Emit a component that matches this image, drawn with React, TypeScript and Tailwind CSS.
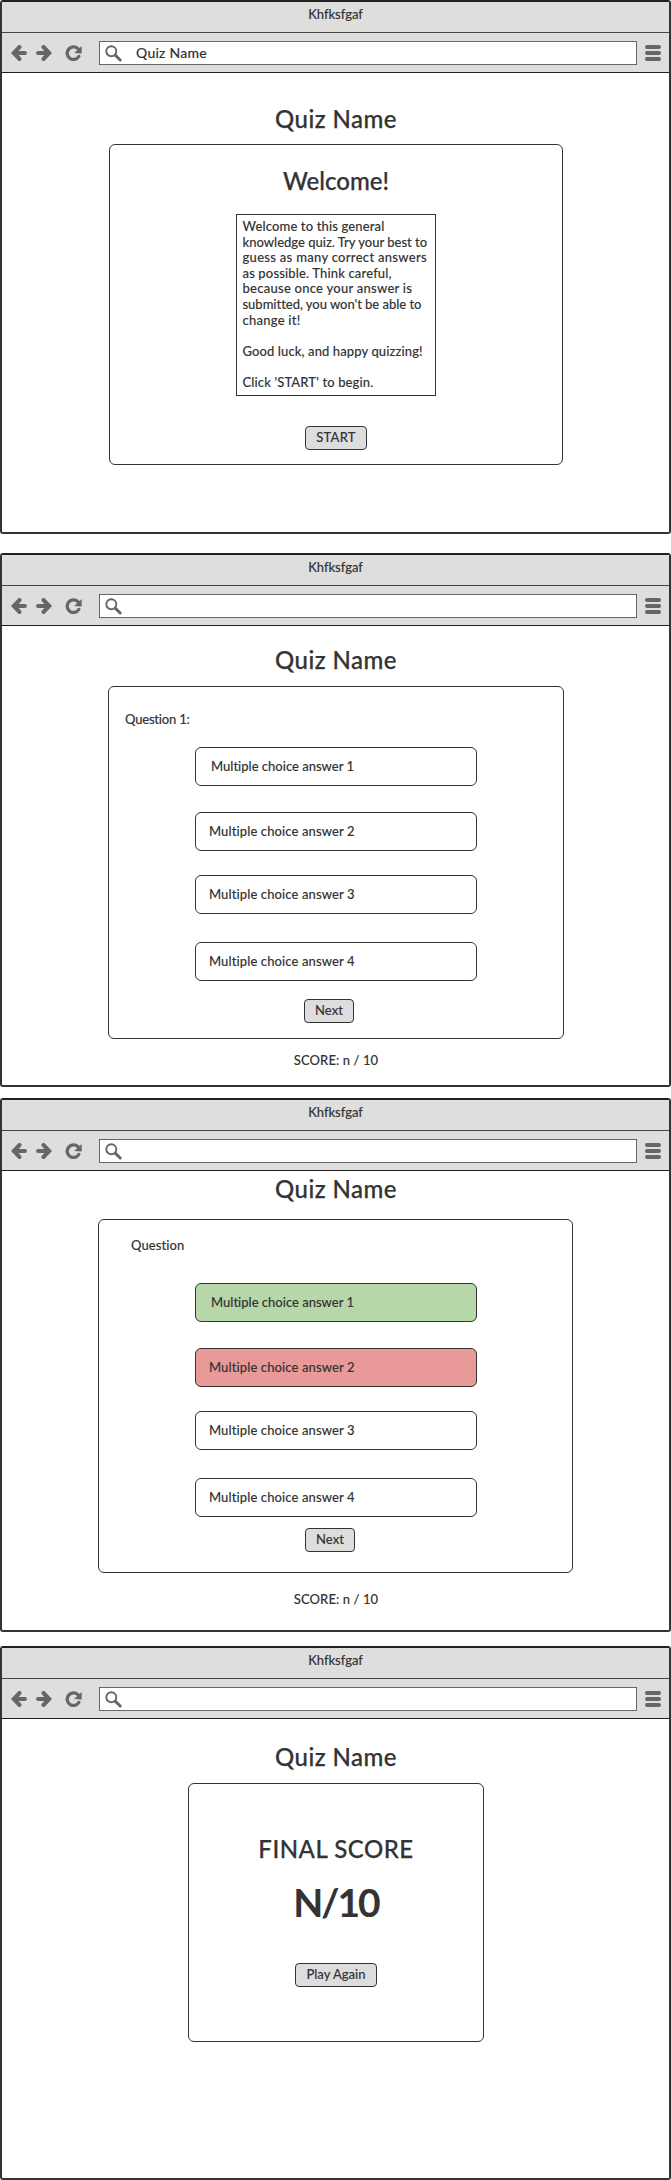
import type { ReactNode } from 'react';

function BackIcon() {
  return (
    <svg width="16" height="16" viewBox="0 0 16 16" fill="none" stroke="#666" strokeWidth="4.2" strokeLinecap="round">
      <path d="M8.4 2.1 2.8 8l5.6 5.9M3.5 8H13.9" />
    </svg>
  );
}

function ForwardIcon() {
  return (
    <svg width="16" height="16" viewBox="0 0 16 16" fill="none" stroke="#666" strokeWidth="4.2" strokeLinecap="round">
      <path d="M7.6 2.1 13.2 8l-5.6 5.9M12.5 8H2.1" />
    </svg>
  );
}

function ReloadIcon() {
  return (
    <svg width="17" height="16" viewBox="0 0 17 16" fill="none">
      <path d="M13.8 11.5A6.3 6.3 0 1 1 12.9 3.7" stroke="#666" strokeWidth="3.3" strokeLinecap="round" />
      <path d="M16.7 1V8.6L9.2 8Z" fill="#666" />
    </svg>
  );
}

function SearchIcon() {
  return (
    <svg width="17" height="17" viewBox="0 0 17 17" fill="none" stroke="#666" strokeLinecap="round">
      <circle cx="6.3" cy="6.2" r="5" strokeWidth="1.9" />
      <path d="m10.2 10.2 5 4.8" strokeWidth="3" />
    </svg>
  );
}

function MenuIcon() {
  return (
    <div className="flex flex-col gap-0.5">
      <div className="h-1 w-4 rounded-full bg-[#666]" />
      <div className="h-1 w-4 rounded-full bg-[#666]" />
      <div className="h-1 w-4 rounded-full bg-[#666]" />
    </div>
  );
}

function BrowserWindow({ url, className = '', children }: { url?: string; className?: string; children: ReactNode }) {
  return (
    <section
      className={`flex h-[534px] w-[671px] flex-col overflow-hidden rounded-[3px] border-2 border-[#333] border-t-[#231f20] bg-white ${className}`}
    >
      <div className="h-[31px] shrink-0 border-b border-[#444] bg-[#dededd] pt-[5px] text-center tracking-[-0.05px]">
        Khfksfgaf
      </div>
      <div className="flex h-10 shrink-0 items-start border-b border-[#231f20] bg-[#dededd] pl-[9px]">
        <div className="mt-3">
          <BackIcon />
        </div>
        <div className="mt-3 ml-[9px]">
          <ForwardIcon />
        </div>
        <div className="mt-3 ml-[13px]">
          <ReloadIcon />
        </div>
        <div className="mt-2 ml-[17px] flex h-6 w-[538px] items-start border border-[#666] bg-white pl-[4.5px]">
          <div className="mt-[3px]">
            <SearchIcon />
          </div>
          {url && <span className="mt-0.5 ml-[14.5px] text-[14px] leading-[17px] tracking-[0.25px]">{url}</span>}
        </div>
        <div className="mt-3 ml-2">
          <MenuIcon />
        </div>
      </div>
      <div className="flex flex-col items-center pl-px">{children}</div>
    </section>
  );
}

function Heading({ className = '' }: { className?: string }) {
  return (
    <h1 className={`text-[24px] leading-[29px] tracking-[0.45px] [-webkit-text-stroke:0.25px_#333] ${className}`}>
      Quiz Name
    </h1>
  );
}

function Button({ className = '', children }: { className?: string; children: ReactNode }) {
  return (
    <button
      className={`flex h-6 items-start justify-center rounded-[4px] border border-[#333] bg-[#ddd] pt-[3px] ${className}`}
    >
      {children}
    </button>
  );
}

function Answer({ n, className = '' }: { n: number; className?: string }) {
  return (
    <div
      className={`ml-[86px] h-[39px] w-[282px] rounded-[6px] border border-[#333] pt-[11px] ${
        n === 1 ? 'pl-[15px] tracking-normal' : 'pl-[13px] tracking-[0.11px]'
      } ${className}`}
    >
      Multiple choice answer {n}
    </div>
  );
}

function Score({ className = '' }: { className?: string }) {
  return <p className={`tracking-[0.1px] ${className}`}>SCORE: n / 10</p>;
}

export default function App() {
  return (
    <main className="flex w-[671px] flex-col bg-white font-['Lato',sans-serif] text-[13px] leading-[15.6px] font-medium whitespace-nowrap text-[#333] [-webkit-text-stroke:0.1px_#333] [font-variant-ligatures:none]">
      <BrowserWindow url="Quiz Name">
        <Heading className="mt-[31px]" />
        <div className="mt-[11px] flex h-[321px] w-[454px] flex-col items-center rounded-[6px] border border-[#333]">
          <h2 className="mt-[21px] text-[24px] leading-[29px] [-webkit-text-stroke:0.25px_#333]">Welcome!</h2>
          <div className="mt-[19px] flex h-[182px] w-[200px] flex-col items-start border border-[#333] pt-1 pl-[5.5px]">
            <span className="tracking-[0.15px]">Welcome to this general</span>
            <span>knowledge quiz. Try your best to</span>
            <span className="tracking-[0.3px]">guess as many correct answers</span>
            <span className="tracking-[0.15px]">as possible. Think careful,</span>
            <span className="tracking-[0.26px]">because once your answer is</span>
            <span className="tracking-[-0.03px]">submitted, you won't be able to</span>
            <span className="tracking-[0.25px]">change it!</span>
            <span className="mt-[15.6px] tracking-[0.11px]">Good luck, and happy quizzing!</span>
            <span className="mt-[15.6px] tracking-[0.13px]">Click 'START' to begin.</span>
          </div>
          <Button className="mt-[30px] w-[62px] tracking-[0.2px]">START</Button>
        </div>
      </BrowserWindow>

      <BrowserWindow className="mt-[19px]">
        <Heading className="mt-[19px]" />
        <div className="mt-3 flex h-[353px] w-[456px] flex-col items-start rounded-[6px] border border-[#333]">
          <p className="mt-[25px] ml-4 h-[15px] tracking-[-0.2px]">Question 1:</p>
          <Answer n={1} className="mt-5" />
          <Answer n={2} className="mt-[26px]" />
          <Answer n={3} className="mt-6" />
          <Answer n={4} className="mt-7" />
          <Button className="mt-[18px] ml-[195px] w-[50px]">Next</Button>
        </div>
        <Score className="mt-[14px]" />
      </BrowserWindow>

      <BrowserWindow className="mt-[11px]">
        <Heading className="mt-[3px]" />
        <div className="mt-4 mr-px flex h-[354px] w-[475px] flex-col items-start rounded-[6px] border border-[#333] pl-2.5">
          <p className="mt-[18px] ml-[22px] h-[15px] tracking-[0.07px]">Question</p>
          <Answer n={1} className="mt-[30px] bg-[#b6d7a8]" />
          <Answer n={2} className="mt-[26px] bg-[#ea9999]" />
          <Answer n={3} className="mt-6" />
          <Answer n={4} className="mt-7" />
          <Button className="mt-[11px] ml-[196px] w-[50px]">Next</Button>
        </div>
        <Score className="mt-[19px]" />
      </BrowserWindow>

      <BrowserWindow className="mt-[14px]">
        <Heading className="mt-[23px]" />
        <div className="mt-3 flex h-[259px] w-[296px] flex-col items-center rounded-[6px] border border-[#333]">
          <h2 className="mt-[50px] text-[24px] leading-[29px] tracking-[0.5px] [-webkit-text-stroke:0.25px_#333]">
            FINAL SCORE
          </h2>
          <p className="mt-4 text-[39px] leading-[47px] font-bold tracking-[-2px]">N/10</p>
          <Button className="mt-[37px] w-[82px]">Play Again</Button>
        </div>
      </BrowserWindow>
    </main>
  );
}
